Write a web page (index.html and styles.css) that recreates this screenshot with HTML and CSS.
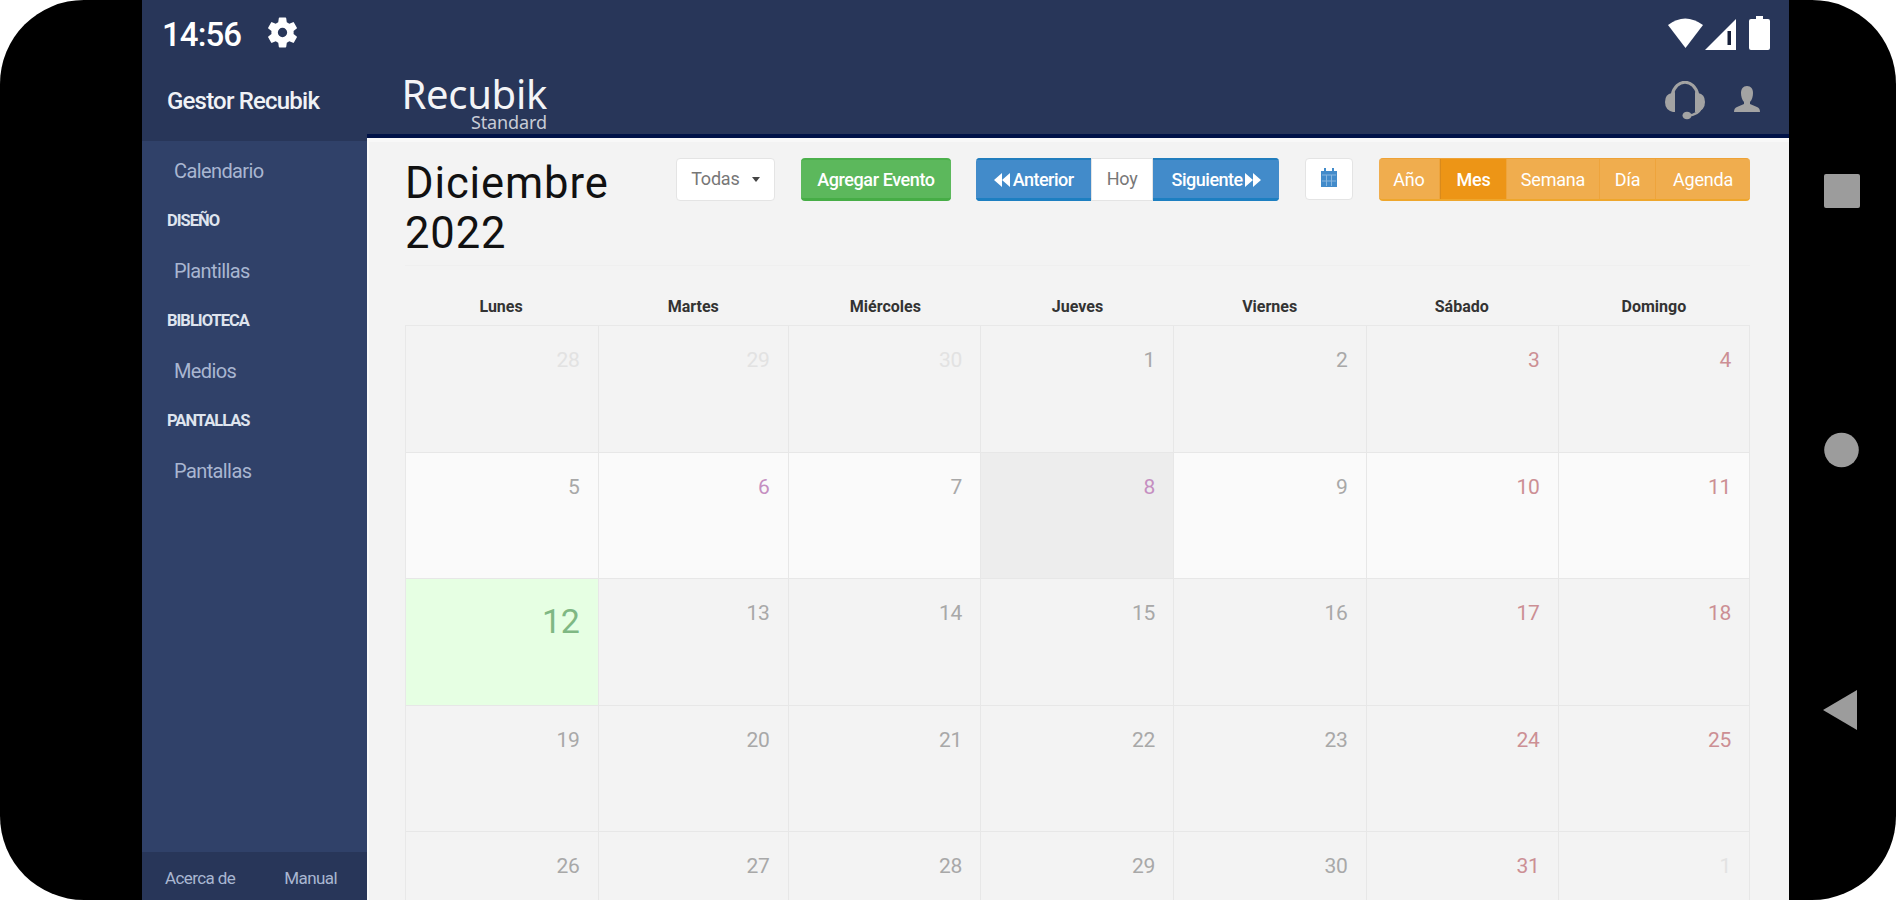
FILE: index.html
```html
<!DOCTYPE html>
<html lang="es">
<head>
<meta charset="utf-8">
<title>Gestor Recubik</title>
<link rel="stylesheet" href="styles.css">
</head>
<body>
<div class="phone">
  <div class="screen">
    <div class="status">
      <span class="clock">14:56</span>
      <svg class="gear" viewBox="2 2 20 20"><path fill="#fff" fill-rule="evenodd" d="M19.14 12.94c.04-.3.06-.61.06-.94s-.02-.64-.07-.94l2.03-1.58a.49.49 0 0 0 .12-.61l-1.92-3.32a.49.49 0 0 0-.59-.22l-2.39.96a7 7 0 0 0-1.62-.94l-.36-2.54A.48.48 0 0 0 13.92 2.400h-3.840a.48.48 0 0 0-.47.41l-.36 2.54a7 7 0 0 0-1.62.94l-2.390-.96a.49.49 0 0 0-.59.22L2.740 8.870a.48.48 0 0 0 .12.61l2.030 1.580a6 6 0 0 0 0 1.880l-2.030 1.580a.49.49 0 0 0-.12.61l1.920 3.320c.12.22.37.29.59.22l2.390-.96c.5.38 1.030.7 1.620.94l.36 2.540c.05.24.24.41.48.41h3.840c.24 0 .44-.17.47-.41l.36-2.540a7 7 0 0 0 1.620-.94l2.390.96c.22.08.47 0 .59-.22l1.920-3.320a.48.48 0 0 0-.12-.61zM12 15a3 3 0 1 1 0-6 3 3 0 0 1 0 6z"/></svg>
      <svg class="signals" viewBox="0 0 106 36"><g fill="#fff"><path d="M1 10Q18-3 36 10L18.500 33z"/><path d="M69 4v31H38z"/><path d="M89 1h7v3h5q2 0 2 2v27q0 2-2 2H84q-2 0-2-2V6q0-2 2-2h5z"/></g><path fill="#17203a" d="M60.500 16h3.500v14h-3.500z"/></svg>
    </div>
    <div class="app">
      <aside class="sidebar">
        <div class="brand">Gestor Recubik</div>
        <nav class="menu">
          <a class="item">Calendario</a>
          <span class="group">DISEÑO</span>
          <a class="item">Plantillas</a>
          <span class="group">BIBLIOTECA</span>
          <a class="item">Medios</a>
          <span class="group">PANTALLAS</span>
          <a class="item">Pantallas</a>
        </nav>
        <div class="foot"><a>Acerca de</a><a>Manual</a></div>
      </aside>
      <main class="main">
        <header class="top">
          <div class="logo"><span class="name">Recubik</span><span class="edition">Standard</span></div>
          <svg class="headset" viewBox="0 0 40 39"><g fill="none" stroke="#a3a3a3"><path stroke-width="3" d="M7 14C11-3 29-3 33 14"/><path stroke-width="2.500" d="M36 27q-3 7-13 7.500"/></g><g fill="#a3a3a3"><path d="M10 11v20H8Q0 29 0 21t7-9zM30 11v20h2q8-2 8-10t-7-9z"/><ellipse cx="22" cy="34.500" rx="4.500" ry="3.800"/></g></svg>
          <svg class="person" viewBox="0 0 26 26"><path fill="#a3a3a3" d="M13 0c-4 0-6 3-6 7 0 3 1 7 3 9v2L3 21q-3 1-3 5h26q0-4-3-5l-7-3v-2C18 14 19 10 19 7c0-4-2-7-6-7z"/></svg>
        </header>
        <section class="content">
          <div class="toolbar">
            <h1 class="title">Diciembre 2022</h1>
            <button class="btn white todas">Todas<i class="caret"></i></button>
            <button class="btn green">Agregar Evento</button>
            <div class="group-btn blue">
              <button class="btn prev"><svg class="arrows" viewBox="0 0 16 14"><path fill="#fff" d="M8 0v14L0 7zM16 0v14L8 7z"/></svg>Anterior</button>
              <button class="btn white hoy">Hoy</button>
              <button class="btn next">Siguiente<svg class="arrows" viewBox="0 0 16 14"><path fill="#fff" d="M0 0v14l8-7zM8 0v14l8-7z"/></svg></button>
            </div>
            <button class="btn white cal"><svg class="cal-icon" viewBox="0 0 16 19"><path fill="#428bca" d="M0 3h3V0h2v3h6V0h2v3h3v16H0z"/><path stroke="#86b5df" stroke-width="1" d="M1 7h14M1 13h14M5.500 7v11M10.500 7v11"/></svg></button>
            <div class="group-btn orange">
              <button class="btn anio">Año</button>
              <button class="btn active">Mes</button>
              <button class="btn semana">Semana</button>
              <button class="btn dia">Día</button>
              <button class="btn agenda">Agenda</button>
            </div>
          </div>
          <div class="weekdays"><span>Lunes</span><span>Martes</span><span>Miércoles</span><span>Jueves</span><span>Viernes</span><span>Sábado</span><span>Domingo</span></div>
          <div class="month">
            <div class="day out">28</div><div class="day out">29</div><div class="day out">30</div><div class="day">1</div><div class="day">2</div><div class="day weekend">3</div><div class="day weekend">4</div>
            <div class="day light">5</div><div class="day light holiday">6</div><div class="day light">7</div><div class="day hover holiday">8</div><div class="day light">9</div><div class="day light weekend">10</div><div class="day light weekend">11</div>
            <div class="day today">12</div><div class="day">13</div><div class="day">14</div><div class="day">15</div><div class="day">16</div><div class="day weekend">17</div><div class="day weekend">18</div>
            <div class="day">19</div><div class="day">20</div><div class="day">21</div><div class="day">22</div><div class="day">23</div><div class="day weekend">24</div><div class="day weekend">25</div>
            <div class="day">26</div><div class="day">27</div><div class="day">28</div><div class="day">29</div><div class="day">30</div><div class="day weekend">31</div><div class="day out">1</div>
          </div>
        </section>
      </main>
    </div>
  </div>
  <div class="navkeys">
    <svg viewBox="0 0 36 36"><rect y="1" width="36" height="34" rx="2" fill="#9c9c9c"/></svg>
    <svg viewBox="0 0 36 36"><circle cx="17.500" cy="18" r="17.300" fill="#9c9c9c"/></svg>
    <svg class="back" viewBox="0 0 36 40"><path fill="#9c9c9c" d="M34 0v40L0 20z"/></svg>
  </div>
</div>
</body>
</html>
```
FILE: styles.css
```css
* { box-sizing: border-box; }
body { margin: 0; background: #fff; font-family: Roboto, sans-serif; overflow: hidden; }
.phone { display: flex; width: 1896px; height: 900px; padding-left: 142px; background: #000; border-radius: 84px; overflow: hidden; }
.screen { display: flex; flex-direction: column; width: 1647px; height: 900px; background: #283659; }

/* Android status bar */
.status { display: flex; align-items: center; flex: none; height: 62px; padding: 5px 16px 0 20px; color: #fff; }
.clock { width: 105px; padding-top: 2px; font-size: 33px; line-height: 40px; font-weight: 500; letter-spacing: -.9px; }
.gear { width: 31px; height: 31px; margin-top: -2px; }
.signals { width: 106px; height: 36px; margin-left: auto; margin-top: -1px; }

.app { display: flex; flex: 1; min-height: 0; }

/* Sidebar */
.sidebar { display: flex; flex-direction: column; width: 225px; background: #304169; }
.brand { height: 79px; padding: 24px 0 0 25px; background: #283659; color: #f0f2f6; font-size: 24px; line-height: 30px; font-weight: 500; white-space: nowrap; letter-spacing: -.8px; }
.menu { display: flex; flex-direction: column; flex: 1; padding-top: 5px; }
.item { height: 51px; padding-left: 32px; line-height: 50px; font-size: 20px; color: #a9b6d1; letter-spacing: -.6px; }
.group { height: 49px; padding-left: 25px; line-height: 48px; font-size: 16.5px; font-weight: 700; color: #dfe4ee; letter-spacing: -1px; }
.foot { display: flex; justify-content: space-between; height: 48px; padding: 0 30px 0 23px; background: #283659; color: #a9b6d1; font-size: 17px; line-height: 52px; letter-spacing: -.6px; }

/* Header */
.main { display: flex; flex-direction: column; width: 1422px; background: #f3f3f3; }
.top { display: flex; flex: none; height: 76px; padding: 0 29px 0 35px; border-bottom: 4px solid #001247; background: #283659; }
.logo { display: flex; flex-direction: column; align-items: flex-end; width: 145px; color: #f3f4f7; font-family: "Noto Sans", sans-serif; white-space: nowrap; }
.name { height: 51px; padding-top: 10px; font-size: 40px; line-height: 43px; letter-spacing: -.3px; }
.edition { font-size: 18px; line-height: 18px; color: #c8ccd6; letter-spacing: -.1px; }
.headset { width: 40px; height: 39px; margin: 19px 29px 0 auto; }
.person { width: 26px; height: 26px; margin-top: 24px; }

/* Toolbar */
.content { display: flex; flex-direction: column; flex: 1; min-height: 0; padding: 0 39px 0 36px; border-left: 2px solid #fafafa; border-top: 4px solid #f8f8f8; }
.toolbar { display: flex; flex: none; height: 124px; padding-top: 16px; border-bottom: 1px solid #efefef; }
.title { flex: none; width: 271px; margin: 1px 0 0; padding-right: 50px; font-size: 43.500px; line-height: 50px; font-weight: 400; color: #111; letter-spacing: .9px; }
.btn { display: flex; align-items: center; justify-content: center; height: 43px; padding: 0 0 1px; border: 0; border-radius: 4px; font: 18px/40px Roboto, sans-serif; color: #fff; background: none; white-space: nowrap; letter-spacing: -.2px; }
.white { border: 1px solid #e4e4e4; background: #fff; color: #777; }
.todas { width: 99px; margin-right: 26px; gap: 12px; }
.caret { border: 4px solid transparent; border-top: 5px solid #444; border-bottom: 0; }
.green { width: 151px; margin-right: 25px; background: #5cb85c; border-top: 2px solid #4cb04c; border-bottom: 3px solid #46ad46; padding: 1px 0 0; font-weight: 500; letter-spacing: -.4px; }
.group-btn { display: flex; flex: none; height: 43px; overflow: hidden; border-radius: 4px; }
.group-btn .btn { border-radius: 0; }
.blue { margin-right: 26px; background: #428bca; }
.blue .prev, .blue .next { border-top: 2px solid #227dbd; border-bottom: 3px solid #1d7fc1; padding: 1px 0 0; font-weight: 500; letter-spacing: -.5px; }
.prev { width: 115px; gap: 3px; }
.hoy { width: 62px; }
.next { width: 126px; gap: 2px; }
.arrows { width: 16px; height: 14px; }
.cal { width: 48px; height: 42px; margin-right: 26px; }
.cal-icon { width: 16px; height: 19px; margin-top: -2px; }
.orange { width: 371px; background: #f0ad4e; border-bottom: 2px solid #eea62c; border-top: 1px solid #eea236; }
.orange .btn { height: 40px; padding: 1px 0 0; border-right: 1px solid #eea43c; }
.orange .btn:last-child { border-right: 0; }
.anio { width: 61px; }
.orange .active { width: 67px; background: #ed9516; border-left: 1px solid #d98a1c; font-weight: 500; }
.semana { width: 93px; }
.dia { width: 56px; }
.agenda { width: 94px; }

/* Month grid */
.weekdays { display: grid; grid-template-columns: repeat(7, 1fr); flex: none; height: 59px; padding-top: 30px; font-size: 16px; line-height: 22px; font-weight: 700; text-align: center; color: #333; }
.month { display: grid; grid-template-columns: 192.500px 190px 192.500px 193px 192.500px 192px 1fr; grid-auto-rows: 126.500px; flex: none; border-left: 1px solid #e8e8e8; border-top: 1px solid #e8e8e8; }
.day { padding: 22px 18px 0 0; border-right: 1px solid #e7e7e7; border-bottom: 1px solid #e7e7e7; font-size: 21px; line-height: 25px; text-align: right; color: #a8a8a8; letter-spacing: -.3px; }
.light { background: #fafafa; }
.weekend { color: #cc8f94; }
.holiday { color: #c58fc1; }
.hover { background: #ededed; }
.out { color: #e2e2e2; }
.today { background: #e6ffe3; color: #7fb883; font-size: 34px; line-height: 40px; }

/* Android navigation keys */
.navkeys { display: flex; flex-direction: column; justify-content: space-between; width: 107px; padding: 173px 0 170px 35px; }
.navkeys svg { width: 36px; height: 36px; }
.navkeys .back { height: 40px; margin-left: -1px; }
```
